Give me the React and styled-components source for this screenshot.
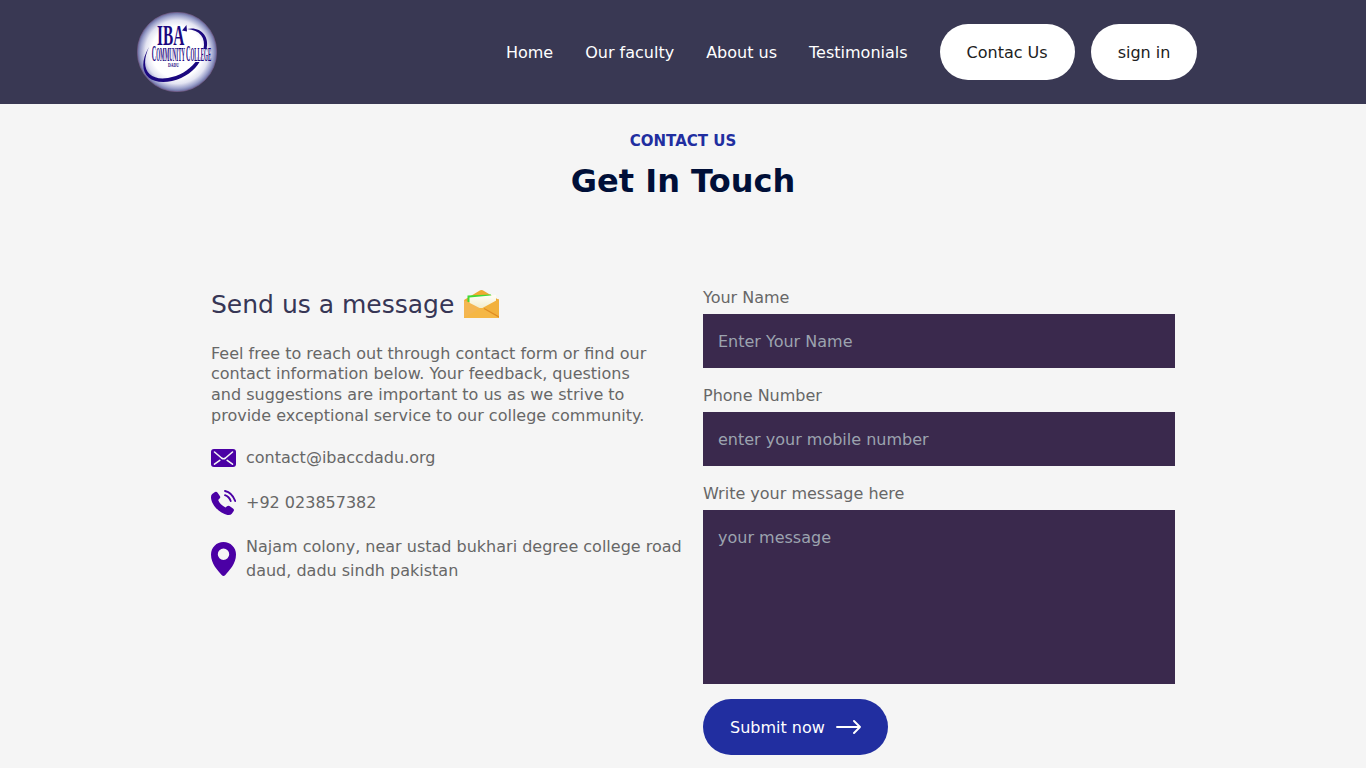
import React from "react";
import styled, { createGlobalStyle } from "styled-components";

const GlobalStyle = createGlobalStyle`
  * { box-sizing: border-box; margin: 0; padding: 0; }
  html, body { height: 100%; overflow: hidden; }
  body { background: #f5f5f5; color: #676767; font: 16px/24px "DejaVu Sans", sans-serif; }
`;

const Navbar = styled.nav`
  display: flex;
  align-items: center;
  justify-content: space-between;
  height: 104px;
  padding: 12px 168.6px 12px 136.6px;
  background: #393853;
`;
const Logo = styled.svg`
  display: block;
  width: 80px;
  height: 80px;
`;
const NavLinks = styled.ul`
  display: flex;
  align-items: center;
  list-style: none;
`;
const NavItem = styled.li`
  margin-left: ${(p) => p.$gap}px;
  line-height: 26px;
  padding-top: ${(p) => (p.$button ? 0 : 2)}px;
  color: #fff;
`;
const Button = styled.button`
  display: flex;
  align-items: center;
  gap: 11px;
  height: 56px;
  padding: 2px 27px 0;
  border: 0;
  border-radius: 30px;
  font: inherit;
  white-space: nowrap;
  background: ${(p) => (p.$primary ? "#212ea0" : "#fff")};
  color: ${(p) => (p.$primary ? "#fff" : "#212121")};
  svg { margin-top: -2px; }
`;
const Title = styled.header`
  height: 182px;
  padding-top: 27px;
  text-align: center;
`;
const Eyebrow = styled.p`
  font-size: 15px;
  line-height: 20px;
  font-weight: 700;
  color: #212ea0;
`;
const Heading = styled.h2`
  margin-top: 10px;
  font-size: 32px;
  line-height: 40px;
  font-weight: 700;
  color: #000f38;
`;
const Contact = styled.main`
  display: grid;
  grid-template-columns: 472px 472px;
  column-gap: 20px;
  padding-left: 211px;
`;
const Info = styled.section`
  padding-top: 3px;
`;
const MessageTitle = styled.h3`
  display: flex;
  align-items: flex-start;
  gap: 10px;
  height: 30px;
  margin-bottom: 24.6px;
  font-size: 25px;
  line-height: 32px;
  font-weight: 400;
  color: #373655;
  white-space: nowrap;
  svg { margin-top: 1px; }
`;
const Intro = styled.p`
  max-width: 450px;
  line-height: 20.8px;
`;
const Details = styled.ul`
  display: flex;
  flex-direction: column;
  gap: 20.25px;
  margin-top: 19px;
  list-style: none;
`;
const Detail = styled.li`
  display: flex;
  align-items: center;
  gap: 10px;
`;
const Icon = styled.svg`
  display: block;
  flex: none;
`;
const Form = styled.form`
  display: flex;
  flex-direction: column;
  align-items: flex-start;
`;
const Label = styled.label`
  margin-bottom: 4px;
`;
const Input = styled.input`
  display: block;
  width: 100%;
  height: 54px;
  margin: 0 0 16px;
  padding: 15px;
  border: 0;
  background: #3a294d;
  color: #fff;
  font: inherit;
  resize: none;
  &::placeholder { color: #9ca3af; opacity: 1; }
`;
const TextArea = styled(Input).attrs({ as: "textarea" })`
  height: 174px;
  margin-bottom: 15px;
  padding-top: 16px;
`;

const CollegeLogo = () => (
  <Logo viewBox="0 0 80 80">
    <defs>
      <radialGradient id="disc">
        <stop offset="0.64" stopColor="#fff" />
        <stop offset="0.8" stopColor="#e3e4f2" />
        <stop offset="0.92" stopColor="#9ca1cb" />
        <stop offset="1" stopColor="#666a9e" />
      </radialGradient>
    </defs>
    <circle cx="40" cy="40" r="39.7" fill="url(#disc)" stroke="#80608a" strokeWidth=".6" />
    <path d="M50 17C63 14 73 24 69.5 37L66.5 37C69 26 63 18 50 17Z" fill="#1b087f" />
    <path d="M12 35C-2 59 11 74 35 69C48 66 58 58 62.5 50L58.5 50C51 59 42 64 31 66C12 69 2 57 12 35Z" fill="#1b087f" />
    <path d="M45 18.500L49.500 13L50 19.500Z" fill="#1b087f" />
    <g fill="#1b087f" fontFamily="Liberation Serif, serif" fontWeight="700">
      <text transform="translate(20 33) scale(.51 1)" fontSize="30">IBA</text>
      <text transform="translate(14.8 48.8) scale(.272 1)" fontSize="18">
        <tspan fontSize="22.500">C</tspan>OMMUNITY <tspan fontSize="22.500">C</tspan>OLLEGE
      </text>
      <text transform="translate(31 55.3) scale(.585 1)" fontSize="6.500">DADU</text>
    </g>
  </Logo>
);

const OpenEnvelope = () => (
  <Icon width="35" height="28" viewBox="0 0 35 28">
    <defs>
      <linearGradient id="paper" x2="0" y2="1">
        <stop stopColor="#fffef8" />
        <stop offset="1" stopColor="#f1edcc" />
      </linearGradient>
    </defs>
    <path d="M0 10L15 1Q17.500-.8 20 1L35 10V28H0Z" fill="#efaa31" />
    <path d="M3.500 5.500L27 4.500V8H6V12H3.500Z" fill="#43d936" />
    <path d="M5.500 7.500L32 5V18H5.500Z" fill="url(#paper)" />
    <path d="M0 10L17.500 19L0 28Z" fill="#f4b651" />
    <path d="M35 9L17.500 18.500L35 28Z" fill="#f2b13c" />
    <path d="M0 28L15 18.800Q17.500 17 20 18.800L35 28Z" fill="#f5b745" />
    <path d="M20 18.500L35 27" stroke="#df8b22" strokeWidth="1.100" />
  </Icon>
);

const MailIcon = () => (
  <Icon width="25" height="18" viewBox="0 0 25 18">
    <rect width="25" height="18" rx="3" fill="#4b00a5" />
    <path d="M3.500 3L10.500 9Q12.500 10.500 14.500 9L21.500 3M3.500 15.200L8.800 11.400M21.500 15.200L16.200 11.400" fill="none" stroke="#f5f5f5" strokeWidth="1.600" strokeLinecap="round" />
  </Icon>
);

const PhoneIcon = () => (
  <Icon width="25" height="25" viewBox="0 0 25 25">
    <path d="M1.200 4L4 2Q5.500 1.200 6.600 2.800L9 6.300Q9.700 7.500 8.500 8.600L7.200 10Q8.500 14.200 14.500 17.500L16 16.200Q17.200 15.200 18.500 16L22 18.400Q23.500 19.500 22.700 21L20.800 23.800Q19.500 25.300 16.500 24.900C9 23.800-.2 14.500 0 7Q0 5 1.200 4Z" fill="#4b00a5" />
    <path d="M14 1Q21 2.500 24.200 11M14 5.200Q18 6.500 19.700 11" fill="none" stroke="#4b00a5" strokeWidth="1.900" strokeLinecap="round" />
  </Icon>
);

const PinIcon = () => (
  <Icon width="25" height="34" viewBox="0 0 25 34">
    <path fillRule="evenodd" d="M12.500 0C5.500 0 0 5.500 0 12.500C0 22 7 28.500 10.700 33Q12.500 35 14.300 33C18 28.500 25 22 25 12.500C25 5.500 19.500 0 12.500 0ZM12.500 6.500A5.700 5.700 0 1 1 12.500 17.900A5.700 5.700 0 1 1 12.500 6.500Z" fill="#4b00a5" />
  </Icon>
);

const ArrowIcon = () => (
  <Icon width="25" height="14" viewBox="0 0 25 14">
    <path d="M1 7H24M18 1L24 7L18 13" fill="none" stroke="#fff" strokeWidth="1.900" strokeLinecap="round" strokeLinejoin="round" />
  </Icon>
);

export default function App() {
  return (
    <>
      <GlobalStyle />
      <Navbar>
        <CollegeLogo />
        <NavLinks>
          {["Home", "Our faculty", "About us", "Testimonials"].map((name) => (
            <NavItem $gap={32} key={name}>{name}</NavItem>
          ))}
          <NavItem $gap={32} $button><Button>Contac Us</Button></NavItem>
          <NavItem $gap={16} $button><Button>sign in</Button></NavItem>
        </NavLinks>
      </Navbar>
      <Title>
        <Eyebrow>CONTACT US</Eyebrow>
        <Heading>Get In Touch</Heading>
      </Title>
      <Contact>
        <Info>
          <MessageTitle>Send us a message <OpenEnvelope /></MessageTitle>
          <Intro>
            Feel free to reach out through contact form or find our contact information below. Your feedback, questions
            and suggestions are important to us as we strive to provide exceptional service to our college community.
          </Intro>
          <Details>
            <Detail><MailIcon />contact@ibaccdadu.org</Detail>
            <Detail><PhoneIcon />+92 023857382</Detail>
            <Detail><PinIcon /><span>Najam colony, near ustad bukhari degree college road<br />daud, dadu sindh pakistan</span></Detail>
          </Details>
        </Info>
        <Form onSubmit={(e) => e.preventDefault()}>
          <Label htmlFor="name">Your Name</Label>
          <Input id="name" placeholder="Enter Your Name" />
          <Label htmlFor="phone">Phone Number</Label>
          <Input id="phone" placeholder="enter your mobile number" />
          <Label htmlFor="message">Write your message here</Label>
          <TextArea id="message" placeholder="your message" />
          <Button $primary>Submit now <ArrowIcon /></Button>
        </Form>
      </Contact>
    </>
  );
}
